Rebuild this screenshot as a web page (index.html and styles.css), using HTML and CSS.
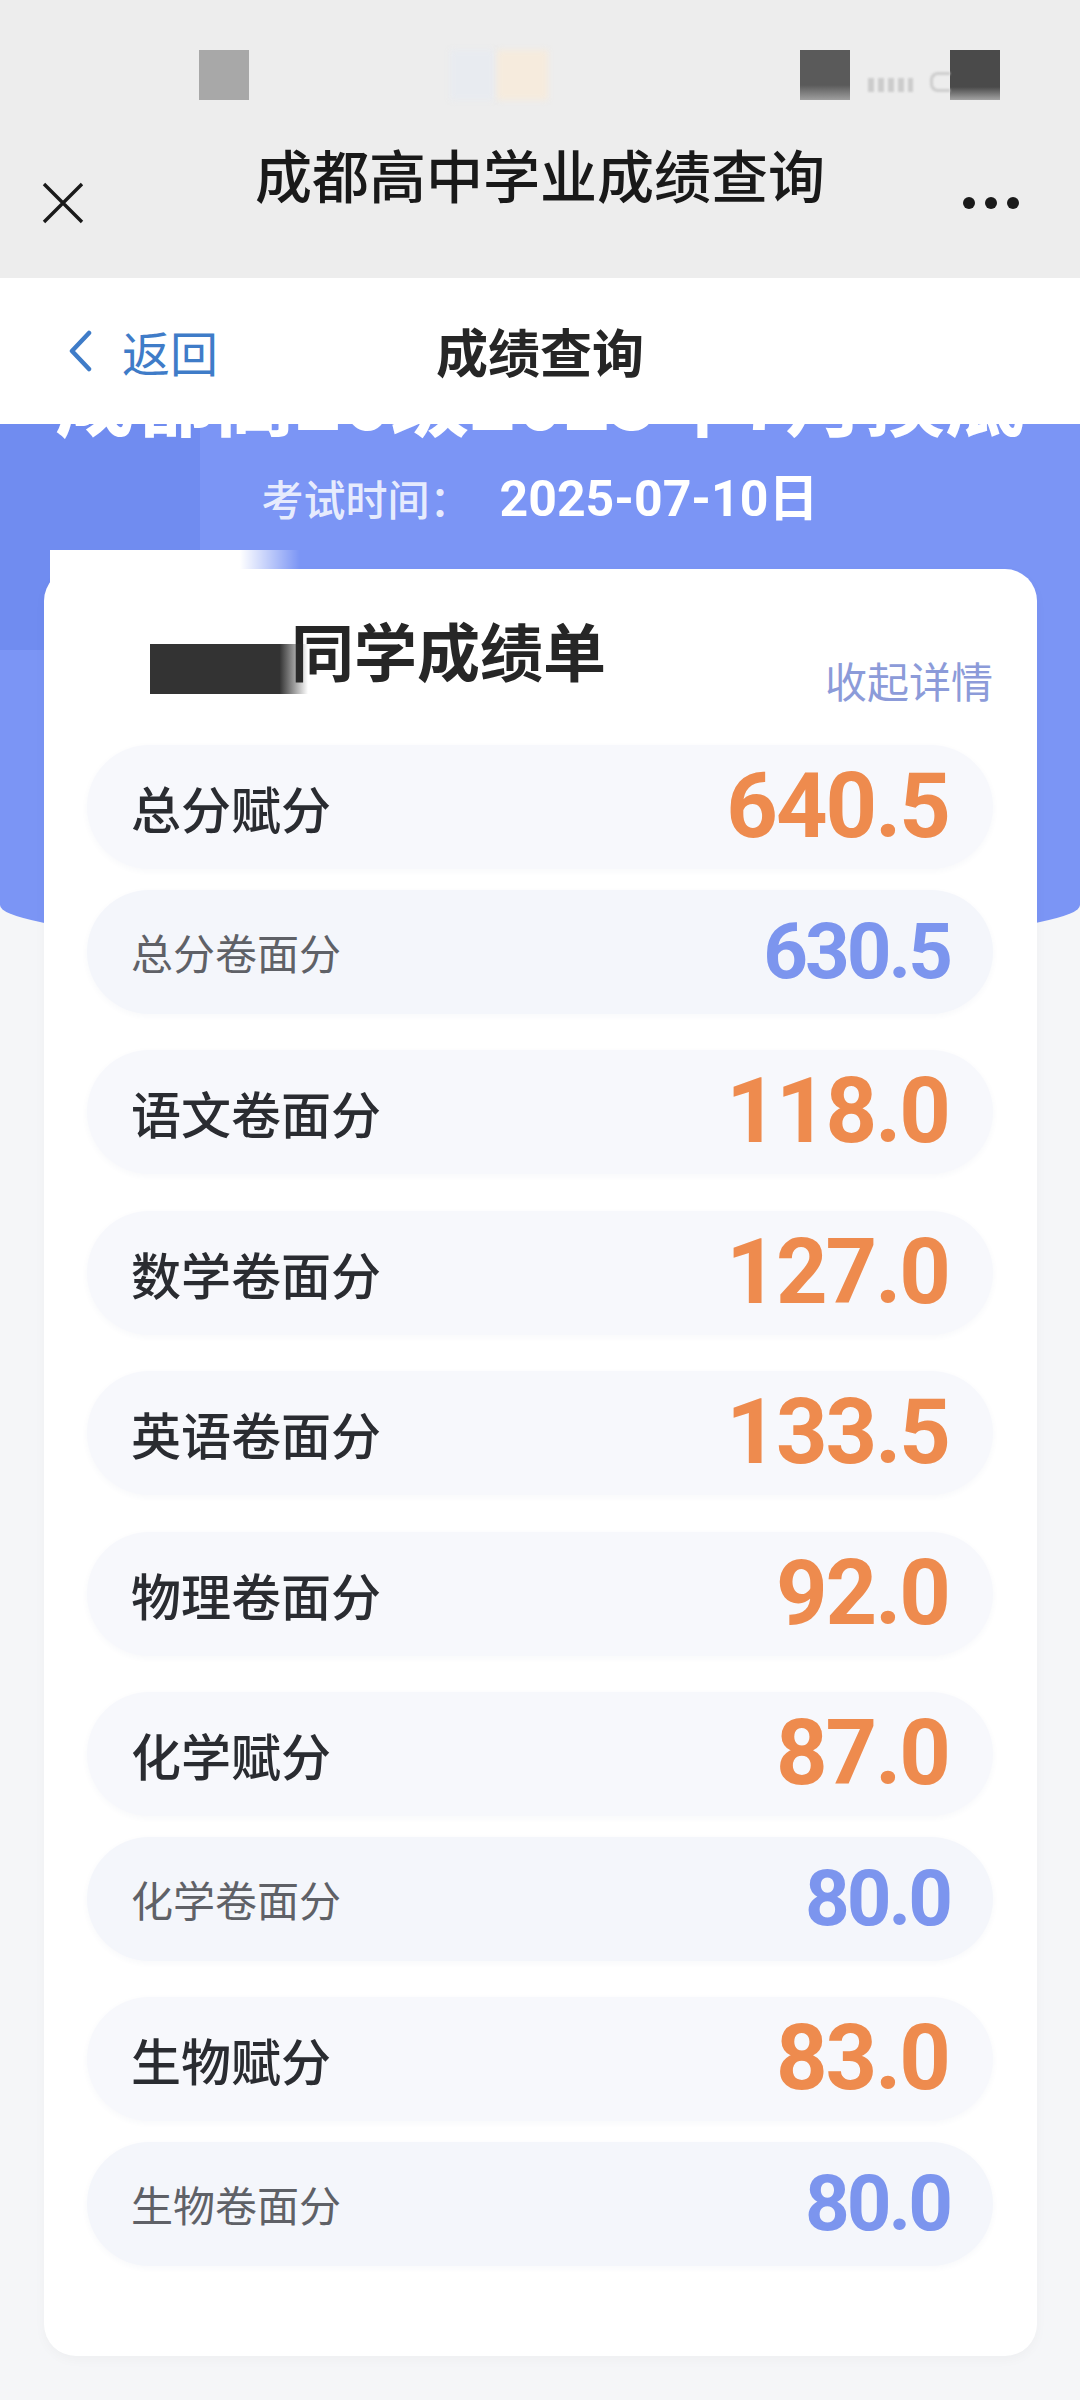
FILE: index.html
```html
<!DOCTYPE html>
<html lang="zh-CN">
<head>
<meta charset="utf-8">
<title>成绩查询</title>
<link rel="stylesheet" href="styles.css">
</head>
<body>
<div class="app">
  <header class="wx-header">
    <div class="status">
      <span class="sb sb-gray"></span>
      <span class="sb sb-blue"></span>
      <span class="sb sb-peach"></span>
      <span class="sb sb-dark"></span>
      <span class="sb sb-signal"></span>
      <span class="sb sb-batt"></span>
      <span class="sb sb-dark2"></span>
    </div>
    <div class="wx-bar">
      <svg class="wx-close" viewBox="0 0 44 44" aria-hidden="true">
        <path d="M3 3 L41 41 M41 3 L3 41" stroke="#1a1a1a" stroke-width="3.4" fill="none" stroke-linecap="butt"/>
      </svg>
      <h1 class="wx-title">成都高中学业成绩查询</h1>
      <svg class="wx-more" viewBox="0 0 56 12" aria-hidden="true">
        <circle cx="6" cy="6" r="6" fill="#1a1a1a"/>
        <circle cx="28" cy="6" r="6" fill="#1a1a1a"/>
        <circle cx="50" cy="6" r="6" fill="#1a1a1a"/>
      </svg>
    </div>
  </header>

  <nav class="nav">
    <a class="nav-back">
      <svg class="chev" viewBox="0 0 26 42" aria-hidden="true">
        <path d="M22 3 L5 21 L22 39" stroke="#3f7cc8" stroke-width="4.5" fill="none" stroke-linecap="round" stroke-linejoin="round"/>
      </svg>
      <span class="back-text">返回</span>
    </a>
    <div class="nav-title">成绩查询</div>
    <span class="nav-spacer"></span>
  </nav>

  <section class="hero">
    <div class="hero-title">成都高26级2025年7月摸底</div>
    <div class="hero-date"><span class="date-label">考试时间：</span><span class="date-val">2025-07-10日</span></div>
  </section>

  <main class="card">
    <div class="card-head">
      <h2 class="card-title"><span class="redact"></span>同学成绩单</h2>
      <span class="collapse">收起详情</span>
    </div>
    <div class="groups">
      <div class="group">
        <div class="row primary"><span class="label">总分赋分</span><span class="value">640.5</span></div>
        <div class="row secondary"><span class="label">总分卷面分</span><span class="value">630.5</span></div>
      </div>
      <div class="group">
        <div class="row primary"><span class="label">语文卷面分</span><span class="value">118.0</span></div>
      </div>
      <div class="group">
        <div class="row primary"><span class="label">数学卷面分</span><span class="value">127.0</span></div>
      </div>
      <div class="group">
        <div class="row primary"><span class="label">英语卷面分</span><span class="value">133.5</span></div>
      </div>
      <div class="group">
        <div class="row primary"><span class="label">物理卷面分</span><span class="value">92.0</span></div>
      </div>
      <div class="group">
        <div class="row primary"><span class="label">化学赋分</span><span class="value">87.0</span></div>
        <div class="row secondary"><span class="label">化学卷面分</span><span class="value">80.0</span></div>
      </div>
      <div class="group">
        <div class="row primary"><span class="label">生物赋分</span><span class="value">83.0</span></div>
        <div class="row secondary"><span class="label">生物卷面分</span><span class="value">80.0</span></div>
      </div>
    </div>
  </main>
</div>
</body>
</html>
```

FILE: styles.css
```css
* { box-sizing: border-box; }

body {
  margin: 0;
  background: #f5f6f8;
  font-family: "Noto Sans CJK SC", "Noto Sans", sans-serif;
}

.app {
  width: 1080px;
  min-height: 2400px;
}

/* ---------- WeChat header ---------- */
.wx-header {
  background: #ededed;
  height: 278px;
}

.status {
  height: 120px;
  display: flex;
  align-items: flex-start;
  padding: 50px 0 0 199px;
}

.sb {
  display: block;
  flex: none;
  height: 50px;
}

.sb-gray { width: 50px; background: #a8a8a8; }
.sb-blue { width: 45px; margin-left: 201px; background: #e8ebf0; filter: blur(3px); }
.sb-peach { width: 51px; margin-left: 2px; background: #f6ebdd; filter: blur(3px); }
.sb-dark { width: 50px; margin-left: 252px; background: linear-gradient(#5a5a5a 70%, #9e9e9e); }
.sb-signal {
  width: 45px;
  height: 14px;
  margin: 28px 0 0 18px;
  background: repeating-linear-gradient(to right, #cccccc 0 6px, transparent 6px 10px);
  filter: blur(1px);
}
.sb-batt {
  width: 20px;
  height: 20px;
  margin: 22px 0 0 17px;
  border: 3px solid #cdcdcd;
  border-right: none;
  border-radius: 8px 0 0 8px;
  filter: blur(1px);
}
.sb-dark2 { width: 50px; background: linear-gradient(#4a4a4a 74%, #a3a3a3); }

.wx-bar {
  height: 158px;
  display: grid;
  grid-template-columns: 1fr auto 1fr;
  align-items: start;
}

.wx-close {
  display: block;
  width: 44px;
  height: 44px;
  margin: 61px 0 0 41px;
}

.wx-title {
  margin: 21px 0 0;
  font-size: 57px;
  line-height: 64px;
  font-weight: 500;
  color: #191919;
  white-space: nowrap;
}

.wx-more {
  display: block;
  justify-self: end;
  width: 56px;
  height: 12px;
  margin: 77px 61px 0 0;
}

/* ---------- page nav ---------- */
.nav {
  height: 146px;
  background: #ffffff;
  display: grid;
  grid-template-columns: 1fr auto 1fr;
  align-items: center;
}

.nav-back {
  display: flex;
  align-items: center;
  padding-left: 67px;
  color: #3f7cc8;
}

.chev {
  display: block;
  width: 26px;
  height: 42px;
}

.back-text {
  margin-left: 29px;
  font-size: 48px;
  line-height: 56px;
}

.nav-title {
  font-size: 52px;
  line-height: 60px;
  font-weight: 700;
  color: #262626;
}

/* ---------- hero ---------- */
.hero {
  height: 526px;
  background: linear-gradient(#708cf0, #708cf0) 0 0 / 200px 226px no-repeat, #7b95f5;
  border-radius: 0 0 540px 540px / 0 0 45px 45px;
  overflow: hidden;
  text-align: center;
  color: #ffffff;
}

.hero-title {
  margin-top: -69px;
  font-size: 80px;
  line-height: 80px;
  font-weight: 700;
  white-space: nowrap;
}

.hero-date {
  margin-top: 35px;
  line-height: 56px;
  display: flex;
  justify-content: center;
  align-items: baseline;
}

.date-label {
  font-size: 42px;
  font-weight: 500;
  color: rgba(255, 255, 255, 0.84);
}

.date-val {
  margin-left: 28px;
  font-family: Roboto, "Noto Sans CJK SC", sans-serif;
  font-size: 50px;
  font-weight: 700;
}

/* ---------- card ---------- */
.card {
  position: relative;
  margin: -381px 43px 0 44px;
  background: #ffffff;
  border-radius: 32px;
  padding: 53px 44px 90px 43px;
  box-shadow: 0 4px 12px rgba(0, 0, 0, 0.03);
}

.card::before {
  content: "";
  position: absolute;
  left: 6px;
  top: -19px;
  width: 250px;
  height: 140px;
  background: linear-gradient(to right, #ffffff 76%, rgba(255, 255, 255, 0));
}

.card-head {
  position: relative;
  display: flex;
  justify-content: space-between;
  align-items: flex-end;
  height: 72px;
  padding-left: 63px;
  margin-bottom: 51px;
}

.card-title {
  margin: 0;
  font-size: 63px;
  line-height: 72px;
  font-weight: 700;
  color: #262626;
  white-space: nowrap;
}

.redact {
  position: relative;
  z-index: 1;
  display: inline-block;
  width: 158px;
  height: 50px;
  margin-right: -17px;
  vertical-align: -18px;
  background: linear-gradient(to right, #333333 0, #333333 82%, rgba(51, 51, 51, 0));
}

.collapse {
  font-size: 42px;
  line-height: 48px;
  color: #8c9bd9;
  margin-bottom: -10px;
}

.groups {
  display: flex;
  flex-direction: column;
  gap: 36.5px;
}

.group {
  display: flex;
  flex-direction: column;
  gap: 20.5px;
}

.row {
  height: 124px;
  border-radius: 62px;
  display: flex;
  align-items: center;
  justify-content: space-between;
  padding: 0 46px 0 44px;
  background: #f7f8fc;
  box-shadow: 0 2px 6px rgba(60, 80, 140, 0.04);
}

.row.secondary {
  background: #f4f6fb;
}

.label {
  font-size: 50px;
  line-height: 60px;
  font-weight: 500;
  color: #2a2c31;
}

.secondary .label {
  font-size: 42px;
  font-weight: 400;
  color: #5f6167;
}

.value {
  font-family: Roboto, sans-serif;
  font-weight: 700;
  font-size: 90px;
  line-height: 1;
  letter-spacing: -2px;
  margin-right: -2px;
  color: #ee8b4e;
}

.secondary .value {
  font-size: 78px;
  letter-spacing: -3px;
  margin-right: -3px;
  color: #7c95ee;
}
```
